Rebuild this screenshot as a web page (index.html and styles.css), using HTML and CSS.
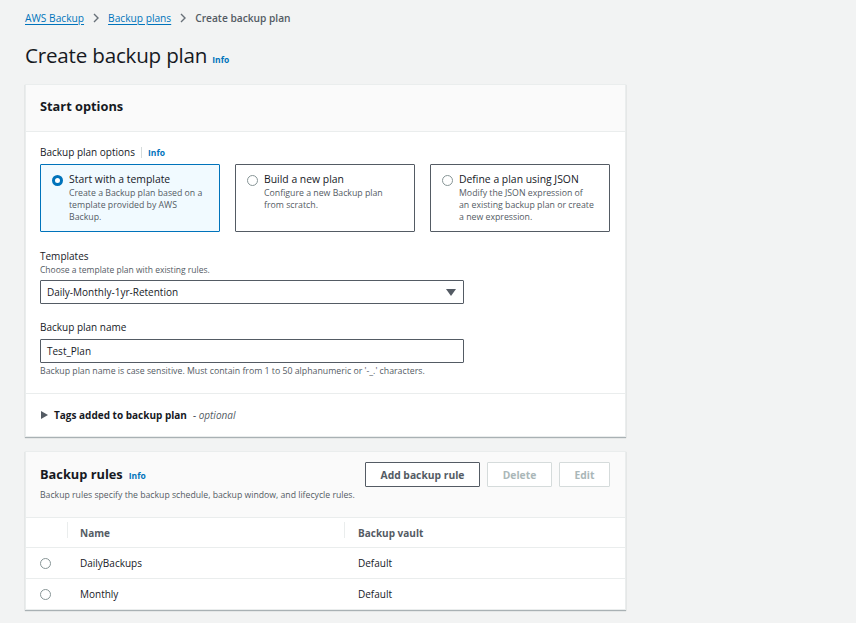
FILE: index.html
```html
<!DOCTYPE html>
<html>
<head>
<meta charset="utf-8">
<link rel="stylesheet" href="styles.css">
</head>
<body>
<div class="page">
  <nav class="crumbs">
    <a class="crumb-link">AWS Backup</a>
    <svg class="chev" width="8" height="10" viewBox="0 0 8 10"><path d="M2 1l4 4-4 4" fill="none" stroke="#687078" stroke-width="1.4"/></svg>
    <a class="crumb-link">Backup plans</a>
    <svg class="chev" width="8" height="10" viewBox="0 0 8 10"><path d="M2 1l4 4-4 4" fill="none" stroke="#687078" stroke-width="1.4"/></svg>
    <span class="crumb-current">Create backup plan</span>
  </nav>
  <div class="title-row">
    <h1 class="title">Create backup plan</h1>
    <span class="info">Info</span>
  </div>

  <section class="card">
    <div class="card-head">
      <h2 class="card-title">Start options</h2>
    </div>
    <div class="card-body">
      <div class="label-row">
        <span class="label">Backup plan options</span>
        <span class="vsep"></span>
        <span class="info small">Info</span>
      </div>
      <div class="tiles">
        <div class="tile selected">
          <span class="radio on"></span>
          <div class="tile-text">
            <div class="tile-title">Start with a template</div>
            <div class="tile-desc">Create a Backup plan based on a template provided by AWS Backup.</div>
          </div>
        </div>
        <div class="tile">
          <span class="radio"></span>
          <div class="tile-text">
            <div class="tile-title">Build a new plan</div>
            <div class="tile-desc">Configure a new Backup plan from scratch.</div>
          </div>
        </div>
        <div class="tile">
          <span class="radio"></span>
          <div class="tile-text">
            <div class="tile-title">Define a plan using JSON</div>
            <div class="tile-desc">Modify the JSON expression of an existing backup plan or create a new expression.</div>
          </div>
        </div>
      </div>

      <div class="field">
        <div class="label">Templates</div>
        <div class="desc">Choose a template plan with existing rules.</div>
        <div class="select">
          <span>Daily-Monthly-1yr-Retention</span>
          <svg class="caret" width="10" height="7" viewBox="0 0 10 7"><path d="M0 0h10L5 7z" fill="#545b64"/></svg>
        </div>
      </div>

      <div class="field name-field">
        <div class="label">Backup plan name</div>
        <div class="input">Test_Plan</div>
        <div class="hint">Backup plan name is case sensitive. Must contain from 1 to 50 alphanumeric or '-_.' characters.</div>
      </div>
    </div>
    <div class="tags-row">
      <svg class="tri" width="7" height="8" viewBox="0 0 7 8"><path d="M0 0l7 4-7 4z" fill="#545b64"/></svg>
      <span class="tags-label">Tags added to backup plan</span>
      <span class="optional">- optional</span>
    </div>
  </section>

  <section class="card rules">
    <div class="rules-head">
      <div class="rules-left">
        <div class="rules-title-row">
          <h2 class="card-title">Backup rules</h2>
          <span class="info small">Info</span>
        </div>
        <div class="desc rules-desc">Backup rules specify the backup schedule, backup window, and lifecycle rules.</div>
      </div>
      <div class="actions">
        <button class="btn">Add backup rule</button>
        <button class="btn disabled">Delete</button>
        <button class="btn disabled">Edit</button>
      </div>
    </div>
    <div class="table">
      <div class="tr th">
        <div class="c0"></div>
        <div class="c1"><span class="colsep"></span>Name</div>
        <div class="c2"><span class="colsep"></span>Backup vault</div>
      </div>
      <div class="tr">
        <div class="c0"><span class="radio"></span></div>
        <div class="c1">DailyBackups</div>
        <div class="c2">Default</div>
      </div>
      <div class="tr">
        <div class="c0"><span class="radio"></span></div>
        <div class="c1">Monthly</div>
        <div class="c2">Default</div>
      </div>
    </div>
  </section>
</div>
</body>
</html>
```

FILE: styles.css
```css
* { box-sizing: border-box; }
html, body { margin: 0; padding: 0; }
body {
  background: #f2f3f3;
  font-family: "Open Sans", "Liberation Sans", sans-serif;
  color: #16191f;
  width: 856px;
  height: 623px;
  overflow: hidden;
}
.page {
  width: 601px;
  margin-left: 25px;
  padding-top: 9px;
}
.crumbs {
  display: flex;
  align-items: center;
  height: 17px;
  font-size: 10.2px;
}
.crumb-link {
  color: #0073bb;
  text-decoration: underline;
  text-underline-offset: 2px;
}
.chev { margin: 0 8px; }
.crumb-current { color: #545b64; font-weight: 600; }
.title-row {
  display: flex;
  align-items: baseline;
  margin-top: 19px;
  height: 20px;
}
.title {
  margin: 0;
  font-size: 20.6px;
  font-weight: 400;
  line-height: 20px;
  letter-spacing: -0.2px;
}
.info {
  color: #0073bb;
  font-weight: 700;
  font-size: 8.5px;
  margin-left: 5px;
}
.card {
  background: #fff;
  border: 1px solid #eaeded;
  box-shadow: 0 1px 1px 0 rgba(0, 28, 36, 0.3);
  margin-top: 19px;
}
.card-head {
  background: #fafafa;
  border-bottom: 1px solid #eaeded;
  height: 47px;
  display: flex;
  align-items: center;
  padding: 0 14px 4px;
}
.card-title {
  margin: 0;
  font-size: 12.8px;
  font-weight: 700;
}
.card-body {
  padding: 13px 14px 16px;
}
.label-row {
  display: flex;
  align-items: center;
  height: 14px;
}
.label {
  font-size: 10px;
  color: #16191f;
}
.vsep {
  width: 1px;
  height: 11px;
  background: #d5dbdb;
  margin: 0 6px 0 6px;
}
.label-row .info { margin-left: 0; }
.tiles {
  display: grid;
  grid-template-columns: repeat(3, 180px);
  gap: 15px;
  margin-top: 5px;
}
.tile {
  border: 1px solid #545b64;
  height: 68px;
  display: flex;
  align-items: flex-start;
  padding: 8px 14px 0 11px;
  border-radius: 1px;
}
.tile.selected {
  border-color: #0073bb;
  background: #f1faff;
}
.radio {
  flex: none;
  width: 11px;
  height: 11px;
  border-radius: 50%;
  border: 1px solid #879596;
  background: #fff;
  display: inline-block;
}
.radio.on {
  border: 3px solid #0073bb;
}
.tile .radio { margin-top: 2px; margin-right: 6px; }
.tile-title {
  font-size: 10.4px;
  line-height: 13px;
  color: #16191f;
}
.tile-desc {
  font-size: 8.75px;
  line-height: 12px;
  color: #545b64;
  margin-top: 1px;
}
.field { margin-top: 17px; }
.field .label { line-height: 14px; }
.desc {
  font-size: 8.5px;
  color: #545b64;
  line-height: 13px;
}
.select, .input {
  width: 424px;
  height: 24px;
  border: 1px solid #545b64;
  border-radius: 1px;
  display: flex;
  align-items: center;
  padding: 0 6px;
  font-size: 10px;
  color: #16191f;
  margin-top: 4px;
}
.select { justify-content: space-between; padding-right: 7px; }
.name-field { margin-top: 16px; }
.name-field .input { margin-top: 5px; }
.hint {
  font-size: 8.75px;
  color: #545b64;
  line-height: 12px;
  margin-top: 2px;
}
.tags-row {
  border-top: 1px solid #eaeded;
  height: 43px;
  display: flex;
  align-items: center;
  padding-left: 15px;
}
.tri { margin-right: 6px; }
.tags-label {
  font-size: 10px;
  font-weight: 700;
  color: #16191f;
}
.optional {
  font-size: 10px;
  font-style: italic;
  color: #545b64;
  margin-left: 6px;
}
.rules {
  margin-top: 14px;
}
.rules-head {
  background: #fafafa;
  border-bottom: 1px solid #eaeded;
  height: 66px;
  display: flex;
  justify-content: space-between;
  padding: 10px 15px 0 14px;
}
.rules-title-row {
  display: flex;
  align-items: baseline;
  margin-top: 3px;
}
.rules-title-row .info { margin-left: 6px; }
.rules-desc { margin-top: 6px; font-size: 8.7px; }
.actions {
  display: flex;
  gap: 7px;
  height: 25px;
}
.btn {
  font-family: inherit;
  font-size: 10.3px;
  font-weight: 700;
  color: #545b64;
  background: #fff;
  border: 1px solid #545b64;
  border-radius: 1px;
  padding: 0 10px;
  height: 25px;
}
.btn.disabled {
  border-color: #d5dbdb;
  color: #aab7b8;
}
.actions .btn:first-child { width: 115px; }
.actions .btn:nth-child(2) { width: 65px; }
.actions .btn:nth-child(3) { width: 51px; }
.tr {
  display: grid;
  grid-template-columns: 41px 277px 1fr;
  height: 31px;
  align-items: center;
  border-top: 1px solid #eaeded;
  font-size: 10px;
}
.tr:first-child { border-top: none; }
.tr.th {
  height: 29px;
  font-weight: 700;
  color: #545b64;
}
.tr .c0 { padding-left: 14px; display: flex; }
.tr .c1, .tr .c2 { padding-left: 14px; position: relative; }
.tr .c1 { padding-left: 13px; }
.colsep {
  position: absolute;
  left: 0;
  top: -4px;
  width: 1px;
  height: 16px;
  background: #eaeded;
}
```
